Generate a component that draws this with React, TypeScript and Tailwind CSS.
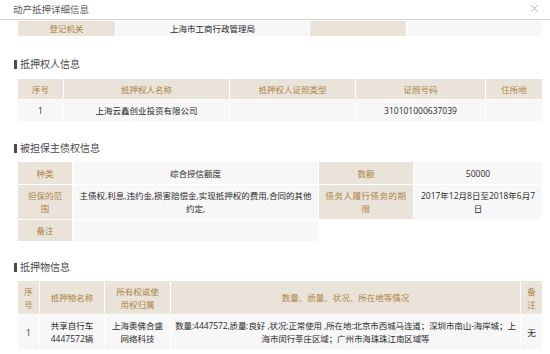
import React from "react";

const L = "bg-[#e9e3da] text-[#ad8443] text-center align-middle border border-white px-[3px] whitespace-nowrap";
const V = "bg-[#f7f7f7] text-[#2a2a2a] text-center align-middle border border-white px-[3px] whitespace-nowrap";

function Heading({ text, cls }: { text: string; cls: string }) {
  return (
    <div className={"flex items-center h-[14px] pl-[14px] " + cls}>
      <span className="w-[3px] h-[9px] bg-[#4a4a4a] mr-[3px]" />
      <span className="text-[10px] text-[#4a4a4a] leading-none">{text}</span>
    </div>
  );
}

export default function App() {
  return (
    <div className="w-[550px] h-[354px] overflow-hidden bg-white text-[8.5px] leading-[13px] font-['Open_Sans','Noto_Sans_CJK_SC',sans-serif]">
      <div className="h-[20px] border-b border-[#d2d2d2] flex items-center justify-between pl-[13px] pr-[12px]">
        <span className="text-[9.5px] text-[#5a5a5a] leading-none">动产抵押详细信息</span>
        <svg width="7" height="7" viewBox="0 0 7 7" className="mb-[2px]">
          <path d="M0.5 0.5L6.5 6.5M6.5 0.5L0.5 6.5" stroke="#aaa" strokeWidth="0.9" />
        </svg>
      </div>

      <div className="pl-[17px] pr-[8px]">
        <table className="w-[525px] table-fixed border-collapse">
          <colgroup>
            <col className="w-[98px]" />
            <col className="w-[194px]" />
            <col className="w-[97px]" />
            <col className="w-[136px]" />
          </colgroup>
          <tbody>
            <tr className="h-[16px]">
              <td className={L}>登记机关</td>
              <td className={V}>上海市工商行政管理局</td>
              <td className={L}></td>
              <td className={V}></td>
            </tr>
          </tbody>
        </table>
      </div>

      <Heading text="抵押权人信息" cls="mt-[20px] mb-[7px]" />
      <div className="pl-[17px] pr-[8px]">
        <table className="w-[525px] table-fixed border-collapse">
          <colgroup>
            <col className="w-[46px]" />
            <col className="w-[166px]" />
            <col className="w-[126px]" />
            <col className="w-[130px]" />
            <col className="w-[57px]" />
          </colgroup>
          <tbody>
            <tr className="h-[21px]">
              <td className={L}>序号</td>
              <td className={L}>抵押权人名称</td>
              <td className={L}>抵押权人证照类型</td>
              <td className={L}>证照号码</td>
              <td className={L}>住所地</td>
            </tr>
            <tr className="h-[22px]">
              <td className={V}>1</td>
              <td className={V}>上海云鑫创业投资有限公司</td>
              <td className={V}></td>
              <td className={V}>310101000637039</td>
              <td className={V}></td>
            </tr>
          </tbody>
        </table>
      </div>

      <Heading text="被担保主债权信息" cls="mt-[19px] mb-[6px]" />
      <div className="pl-[17px] pr-[8px]">
        <table className="w-[525px] table-fixed border-collapse">
          <colgroup>
            <col className="w-[55px]" />
            <col className="w-[246px]" />
            <col className="w-[95px]" />
            <col className="w-[129px]" />
          </colgroup>
          <tbody>
            <tr className="h-[23px]">
              <td className={L}>种类</td>
              <td className={V}>综合授信额度</td>
              <td className={L}>数额</td>
              <td className={V}>50000</td>
            </tr>
            <tr className="h-[35px]">
              <td className={L}>担保的范<br />围</td>
              <td className={V}>主债权,利息,违约金,损害赔偿金,实现抵押权的费用,合同的其他<br />约定,</td>
              <td className={L + " tracking-[0.5px]"}>债务人履行债务的期<br />限</td>
              <td className={V}>2017年12月8日至2018年6月7<br />日</td>
            </tr>
            <tr className="h-[22px]">
              <td className={L}>备注</td>
              <td className={V}></td>
              <td className="bg-white"></td>
              <td className="bg-white"></td>
            </tr>
          </tbody>
        </table>
      </div>

      <Heading text="抵押物信息" cls="mt-[18px] mb-[6px]" />
      <div className="pl-[17px] pr-[8px]">
        <table className="w-[525px] table-fixed border-collapse">
          <colgroup>
            <col className="w-[22px]" />
            <col className="w-[65px]" />
            <col className="w-[66px]" />
            <col className="w-[350px]" />
            <col className="w-[22px]" />
          </colgroup>
          <tbody>
            <tr className="h-[34px]">
              <td className={L}>序<br />号</td>
              <td className={L}>抵押物名称</td>
              <td className={L}>所有权或使<br />用权归属</td>
              <td className={L}>数量、质量、状况、所在地等情况</td>
              <td className={L}>备<br />注</td>
            </tr>
            <tr className="h-[35px]">
              <td className={V}>1</td>
              <td className={V}>共享自行车<br />4447572辆</td>
              <td className={V}>上海奥佛合盛<br />网络科技</td>
              <td className={V + " tracking-[-0.1px]"}>数量:4447572,质量:良好 ,状况:正常使用 ,所在地:北京市西城马连道；深圳市南山-海岸城；上<br />海市闵行莘庄区域；广州市海珠珠江南区域等</td>
              <td className={V}>无</td>
            </tr>
          </tbody>
        </table>
      </div>
    </div>
  );
}
